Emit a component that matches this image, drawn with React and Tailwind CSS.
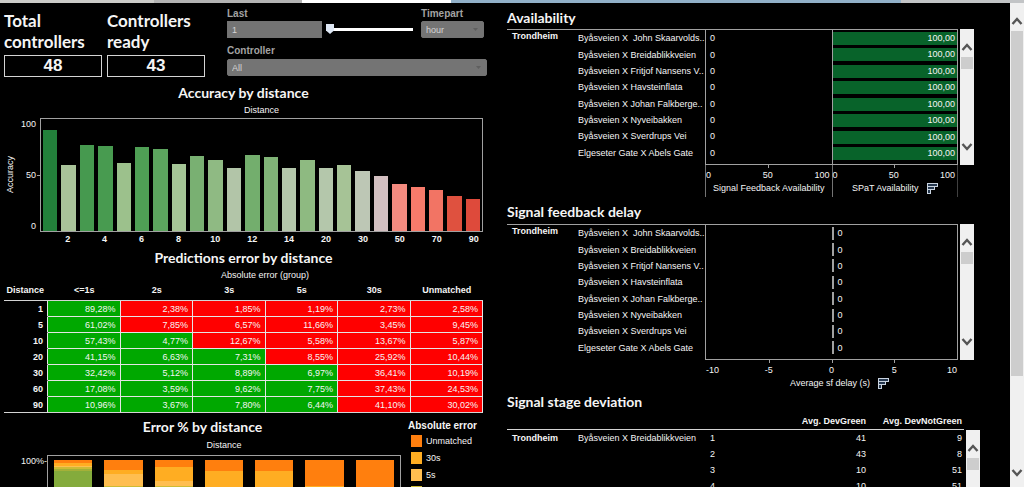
import React, { useState } from 'react';

const accuracy = [
    { distance: 1, value: 90, color: '#23803b' },
    { distance: 2, value: 59, color: '#a9c399' },
    { distance: 3, value: 77, color: '#46994f' },
    { distance: 4, value: 76, color: '#489b50' },
    { distance: 5, value: 61, color: '#9cc18c' },
    { distance: 6, value: 75, color: '#4f9f55' },
    { distance: 7, value: 73, color: '#5ca45e' },
    { distance: 8, value: 60, color: '#a5c596' },
    { distance: 9, value: 67, color: '#79b072' },
    { distance: 10, value: 63, color: '#8fba83' },
    { distance: 11, value: 56, color: '#b2c5a8' },
    { distance: 12, value: 68, color: '#73ae6d' },
    { distance: 13, value: 66, color: '#80b377' },
    { distance: 14, value: 56, color: '#b4c7ab' },
    { distance: 15, value: 63, color: '#8eba81' },
    { distance: 20, value: 56, color: '#b4c7ab' },
    { distance: 25, value: 59, color: '#a6c396' },
    { distance: 30, value: 54, color: '#bdc7b5' },
    { distance: 40, value: 49, color: '#d3bfc1' },
    { distance: 50, value: 42, color: '#f48b80' },
    { distance: 60, value: 39, color: '#f77b6b' },
    { distance: 70, value: 37, color: '#f27464' },
    { distance: 80, value: 31, color: '#df513f' },
    { distance: 90, value: 29, color: '#de4a3b' },
];

const errorGroups = ['<=1s', '2s', '3s', '5s', '30s', 'Unmatched'];

// ok = how many cells from the left are within the target
const predictions = [
    { distance: 1, ok: 1, values: ['89,28%', '2,38%', '1,85%', '1,19%', '2,73%', '2,58%'] },
    { distance: 5, ok: 1, values: ['61,02%', '7,85%', '6,57%', '11,66%', '3,45%', '9,45%'] },
    { distance: 10, ok: 2, values: ['57,43%', '4,77%', '12,67%', '5,58%', '13,67%', '5,87%'] },
    { distance: 20, ok: 3, values: ['41,15%', '6,63%', '7,31%', '8,55%', '25,92%', '10,44%'] },
    { distance: 30, ok: 4, values: ['32,42%', '5,12%', '8,89%', '6,97%', '36,41%', '10,19%'] },
    { distance: 60, ok: 4, values: ['17,08%', '3,59%', '9,62%', '7,75%', '37,43%', '24,53%'] },
    { distance: 90, ok: 4, values: ['10,96%', '3,67%', '7,80%', '6,44%', '41,10%', '30,02%'] },
];

const ORANGE = '#ff7f0e';
const AMBER = '#ffad22';
const PEACH = '#ffbe50';
const OLIVE = '#cdbb35';
const GREEN = '#84ab3c';

const errorBars = [
    [[ORANGE, 3], [AMBER, 3], [PEACH, 1], [OLIVE, 2], ['#a5b038', 2], [GREEN, 40]],
    [[ORANGE, 10], [AMBER, 4], [PEACH, 12], [OLIVE, 20]],
    [[ORANGE, 7], [AMBER, 14], [PEACH, 5], [OLIVE, 20]],
    [[ORANGE, 11], [AMBER, 40]],
    [[ORANGE, 11], [AMBER, 40]],
    [[ORANGE, 26], [AMBER, 20]],
    [[ORANGE, 40]],
];

const legend = [
    { label: 'Unmatched', color: ORANGE },
    { label: '30s', color: AMBER },
    { label: '5s', color: PEACH },
    { label: '', color: OLIVE },
];

const junctions = [
    'Byåsveien X  John Skaarvolds..',
    'Byåsveien X Breidablikkveien',
    'Byåsveien X Fritjof Nansens V..',
    'Byåsveien X Havsteinflata',
    'Byåsveien X Johan Falkberge..',
    'Byåsveien X Nyveibakken',
    'Byåsveien X Sverdrups Vei',
    'Elgeseter Gate X Abels Gate',
];

const deviations = [
    [1, 41, 9],
    [2, 43, 8],
    [3, 10, 51],
    [4, 10, 51],
];

const Title = ({ className = '', children }) => (
    <h2 className={`font-['Trebuchet_MS',Lato,sans-serif] text-[14px] leading-5 font-bold whitespace-nowrap ${className}`}>
        {children}
    </h2>
);

const Chevron = ({ down = false, className = '' }) => (
    <svg className={`h-3 w-3 shrink-0 ${className}`} viewBox="0 0 12 12" fill="none" stroke="#555" strokeWidth="2.4">
        <path d={down ? 'M1.5 3 L6 8 L10.5 3' : 'M1.5 9 L6 4 L10.5 9'} />
    </svg>
);

const Kpi = ({ label, value }) => (
    <div className="w-[98px]">
        <h1 className="font-['Trebuchet_MS',Lato,sans-serif] text-[17px] leading-[21px] font-bold">{label}</h1>
        <div className="mt-[3px] h-[22px] border border-neutral-300 text-center text-[17px] leading-5 font-bold">{value}</div>
    </div>
);

const SelectBox = ({ id, value }) => (
    <div className="relative">
        <select
            id={id}
            defaultValue={value}
            className="block h-[17px] w-full appearance-none rounded-xs border border-neutral-500 bg-[#747474] px-1 text-[9px] leading-3 text-neutral-300"
        >
            <option>{value}</option>
        </select>
        <svg className="pointer-events-none absolute top-[7px] right-1.5 h-[3px] w-[5px]" viewBox="0 0 5 3" fill="#5f5f5f">
            <path d="M0 0 H5 L2.5 3 Z" />
        </svg>
    </div>
);

const Filters = () => {
    const [last, setLast] = useState(1);

    return (
        <form className="w-[260px] pt-1 text-[#a3a3a3]">
            <div className="flex items-end gap-1">
                <div className="w-[95px]">
                    <label htmlFor="last" className="block text-[10px] leading-[14px] font-bold">Last</label>
                    <input
                        id="last"
                        value={last}
                        onChange={(e) => setLast(e.target.value)}
                        className="block h-[17px] w-full border border-neutral-500 bg-[#747474] px-1 text-[9px] text-neutral-300"
                    />
                </div>
                <input
                    type="range"
                    aria-label="Last"
                    min="1"
                    max="60"
                    value={last}
                    onChange={(e) => setLast(e.target.value)}
                    className="mr-1 mb-1 h-[10px] w-0 flex-1 appearance-none bg-[linear-gradient(white,white)] bg-[length:100%_3px] bg-center bg-no-repeat [&::-webkit-slider-thumb]:h-[10px] [&::-webkit-slider-thumb]:w-2 [&::-webkit-slider-thumb]:appearance-none [&::-webkit-slider-thumb]:bg-[#dfe8f5] [&::-webkit-slider-thumb]:[clip-path:polygon(0_0,100%_0,100%_65%,50%_100%,0_65%)]"
                />
                <div className="mr-[3px] w-[63px]">
                    <label htmlFor="timepart" className="block text-[10px] leading-[14px] font-bold">Timepart</label>
                    <SelectBox id="timepart" value="hour" />
                </div>
            </div>
            <label htmlFor="controller" className="mt-1 block text-[10px] leading-[17px] font-bold">Controller</label>
            <SelectBox id="controller" value="All" />
        </form>
    );
};

const AccuracyChart = () => (
    <section className="pr-1">
        <Title className="text-center">Accuracy by distance</Title>
        <div className="ml-9 h-[15px] text-center leading-[15px]">Distance</div>
        <div className="flex h-[114px]">
            <div className="flex w-9 items-center justify-between">
                <span className="rotate-180 [writing-mode:vertical-rl]">Accuracy</span>
                <div className="flex h-full flex-col justify-between text-right leading-3">
                    <span className="pr-1">100</span>
                    <span className="flex items-center justify-end gap-px">
                        50
                        <span className="h-px w-[3px] bg-neutral-400"></span>
                    </span>
                    <span className="pr-1">0</span>
                </div>
            </div>
            <div className="flex flex-1 items-end border border-neutral-400">
                {accuracy.map((bar) => (
                    <div key={bar.distance} className="flex h-full flex-1 items-end px-0.5">
                        <div className="w-full" style={{ height: `${bar.value}%`, backgroundColor: bar.color }}></div>
                    </div>
                ))}
            </div>
        </div>
        <div className="ml-9 flex h-4 leading-[15px] font-bold">
            {accuracy.map((bar, i) => (
                <span key={bar.distance} className="flex w-0 flex-1 justify-center">{i % 2 === 1 && bar.distance}</span>
            ))}
        </div>
    </section>
);

const PredictionsTable = () => (
    <section className="pr-1">
        <Title className="text-center">Predictions error by distance</Title>
        <div className="ml-[43px] h-[14px] text-center leading-[14px]">Absolute error (group)</div>
        <table className="w-full table-fixed border-separate border-spacing-0">
            <thead>
                <tr className="h-[19px]">
                    <th className="w-11 border-b border-neutral-300 p-0 pr-1 text-right">Distance</th>
                    {errorGroups.map((group) => (
                        <th key={group} className="border-b border-neutral-300 p-0">{group}</th>
                    ))}
                </tr>
            </thead>
            <tbody>
                {predictions.map((row) => (
                    <tr key={row.distance} className="h-4 leading-3 last:*:border-b-neutral-300">
                        <th className="border-r border-b border-r-neutral-200 border-b-black p-0 pr-1 text-right">{row.distance}</th>
                        {row.values.map((value, i) => (
                            <td
                                key={errorGroups[i]}
                                className={`border-r border-b border-neutral-200 p-0 pr-1 text-right ${i < row.ok ? 'bg-[#00a800]' : 'bg-[#ff0000]'}`}
                            >
                                {value}
                            </td>
                        ))}
                    </tr>
                ))}
            </tbody>
        </table>
    </section>
);

const ErrorChart = () => (
    <section className="mt-1 flex gap-[7px]">
        <div className="flex-1">
            <Title className="text-center">Error % by distance</Title>
            <div className="ml-[43px] h-[18px] text-center leading-[17px]">Distance</div>
            <div className="flex h-[150px]">
                <span className="w-[43px] text-right leading-3">100%-</span>
                <div className="flex flex-1 border border-neutral-400 pt-1">
                    {errorBars.map((segments, i) => (
                        <div key={i} className="flex-1 px-1.5">
                            {segments.map(([color, height]) => (
                                <div key={color} style={{ height, backgroundColor: color }}></div>
                            ))}
                        </div>
                    ))}
                </div>
            </div>
        </div>
        <div className="w-[79px]">
            <h3 className="text-[10px] leading-[18px] font-bold whitespace-nowrap">Absolute error</h3>
            <ul className="flex flex-col gap-[5px] pl-[3px]">
                {legend.map((item) => (
                    <li key={item.color} className="flex h-3 items-center gap-1 leading-3">
                        <span className="h-3 w-[11px]" style={{ backgroundColor: item.color }}></span>
                        {item.label}
                    </li>
                ))}
            </ul>
        </div>
    </section>
);

const PanelScroll = () => (
    <div className="flex w-[14px] flex-col items-center bg-[#f0f0f0] py-3">
        <Chevron />
        <div className="mt-1 h-3 w-3 bg-[#cdcdcd]"></div>
        <Chevron down className="mt-auto" />
    </div>
);

const SortIcon = () => (
    <svg className="h-[11px] w-[11px]" viewBox="0 0 11 11" fill="#26384f" stroke="#c9d3e0" strokeWidth="1">
        <rect x="0.5" y="0.5" width="10" height="3" />
        <rect x="0.5" y="3.5" width="7" height="3" />
        <rect x="0.5" y="6.5" width="3" height="4" />
    </svg>
);

const JunctionLabels = () => (
    <div className="flex w-[198px] border-t border-neutral-400">
        <span className="w-[71px] pl-[5px] leading-3 font-bold">Trondheim</span>
        <ul className="grid h-[131px] grid-rows-8 items-center leading-3">
            {junctions.map((name) => (
                <li key={name} className="whitespace-pre">{name}</li>
            ))}
        </ul>
    </div>
);

// axis value with a tick mark up to the plot's bottom edge
const Tick = ({ children }) => (
    <span className="relative text-center before:absolute before:-top-1 before:left-1/2 before:h-[3px] before:w-px before:bg-neutral-400">
        {children}
    </span>
);

const AvailabilityAxis = ({ label, icon }) => (
    <div className="h-8 border-l border-neutral-500 last:border-r last:border-r-neutral-700">
        <div className="grid grid-cols-[1fr_2fr_1fr] pr-0.5 pt-1 leading-3">
            <span>0</span>
            <Tick>50</Tick>
            <span className="text-right">100</span>
        </div>
        <div className="flex items-center justify-center gap-2 leading-[14px] whitespace-nowrap">
            {label}
            {icon}
        </div>
    </div>
);

const Availability = () => (
    <section className="pr-1.5">
        <Title className="h-[26px] pt-[5px]">Availability</Title>
        <div className="flex h-[136px]">
            <JunctionLabels />
            <div className="mr-0.5 grid flex-1 grid-cols-2 border border-neutral-400">
                <ul className="grid h-[131px] grid-rows-8 items-center pl-1 leading-3">
                    {junctions.map((name) => <li key={name}>0</li>)}
                </ul>
                <ul className="grid grid-rows-8 border-l border-neutral-400 pb-0.5">
                    {junctions.map((name) => (
                        <li key={name} className="flex items-center">
                            <span className="h-[13px] w-full bg-[#08632a] pr-0.5 text-right leading-[13px]">100,00</span>
                        </li>
                    ))}
                </ul>
            </div>
            <PanelScroll />
        </div>
        <div className="mr-4 ml-[198px] grid grid-cols-2">
            <AvailabilityAxis label="Signal Feedback Availability" />
            <AvailabilityAxis label="SPaT Availability" icon={<SortIcon />} />
        </div>
    </section>
);

const FeedbackDelay = () => (
    <section className="pr-1.5">
        <Title className="h-[27px] pt-[5px]">Signal feedback delay</Title>
        <div className="flex h-[136px]">
            <JunctionLabels />
            <div className="mr-0.5 flex-1 border border-neutral-400">
                <ul className="grid h-[131px] grid-rows-8 items-center pl-[50%] leading-3">
                    {junctions.map((name) => (
                        <li key={name} className="flex items-center gap-1">
                            <span className="h-[13px] w-0.5 bg-neutral-400"></span>
                            0
                        </li>
                    ))}
                </ul>
            </div>
            <PanelScroll />
        </div>
        <div className="mr-4 ml-[198px]">
            <div className="grid grid-cols-[1fr_2fr_2fr_2fr_1fr] px-px pt-1 leading-3">
                <span>-10</span>
                <Tick>-5</Tick>
                <Tick>0</Tick>
                <Tick>5</Tick>
                <span className="text-right">10</span>
            </div>
            <div className="flex items-center justify-center gap-2 pl-4 leading-[14px]">
                Average sf delay (s)
                <SortIcon />
            </div>
        </div>
    </section>
);

const StageDeviation = () => (
    <section>
        <Title className="leading-[24px]">Signal stage deviation</Title>
        <div className="flex items-start gap-0.5">
            <table className="flex-1 table-fixed border-separate border-spacing-0">
                <thead>
                    <tr className="h-4 text-right *:border-b *:border-neutral-300 *:p-0">
                        <th className="w-[71px]" aria-label="City"></th>
                        <th className="w-[132px]" aria-label="Junction"></th>
                        <th className="w-6" aria-label="Stage"></th>
                        <th>Avg. DevGreen</th>
                        <th className="w-[98px]"><span className="pr-0.5">Avg. DevNotGreen</span></th>
                    </tr>
                </thead>
                <tbody>
                    {deviations.map(([stage, green, notGreen], i) => (
                        <tr key={stage} className="h-4 leading-4 *:p-0">
                            <th className="text-left"><span className="pl-[5px]">{i === 0 && 'Trondheim'}</span></th>
                            <td className="whitespace-nowrap">{i === 0 && junctions[1]}</td>
                            <td>{stage}</td>
                            <td className="text-right">{green}</td>
                            <td className="text-right"><span className="pr-0.5">{notGreen}</span></td>
                        </tr>
                    ))}
                </tbody>
            </table>
            <div className="mt-4 flex h-[136px]">
                <PanelScroll />
            </div>
        </div>
    </section>
);

const App = () => (
    <div className="flex h-screen flex-col overflow-hidden bg-black font-['Liberation_Sans',Arial,sans-serif] text-[9px] text-neutral-100">
        <div className="flex h-[3px] shrink-0">
            <div className="w-[15%] bg-[#cbcbc8]"></div>
            <div className="w-[14.5%] bg-[#b3b3b3]"></div>
            <div className="w-[14.5%] bg-white"></div>
            <div className="w-[44%] bg-[#91b0c8]"></div>
            <div className="flex-1 bg-[#c2c4c6]"></div>
        </div>
        <div className="flex min-h-0 flex-1">
            <main className="grid flex-1 grid-cols-[minmax(0,483fr)_minmax(0,473fr)] gap-5 overflow-hidden pr-[30px] pl-1">
                <div>
                    <header className="flex h-20 justify-between">
                        <div className="flex gap-[5px] pt-[7px]">
                            <Kpi label="Total controllers" value="48" />
                            <Kpi label="Controllers ready" value="43" />
                        </div>
                        <Filters />
                    </header>
                    <AccuracyChart />
                    <PredictionsTable />
                    <ErrorChart />
                </div>
                <div>
                    <Availability />
                    <FeedbackDelay />
                    <StageDeviation />
                </div>
            </main>
            <aside className="flex w-[14px] flex-col items-center bg-[#f0f0f0]">
                <Chevron className="mt-3 mb-1" />
                <div className="h-[345px] w-3 bg-[#cdcdcd]"></div>
                <Chevron down className="mt-auto mb-2" />
            </aside>
        </div>
    </div>
);

export default App;
